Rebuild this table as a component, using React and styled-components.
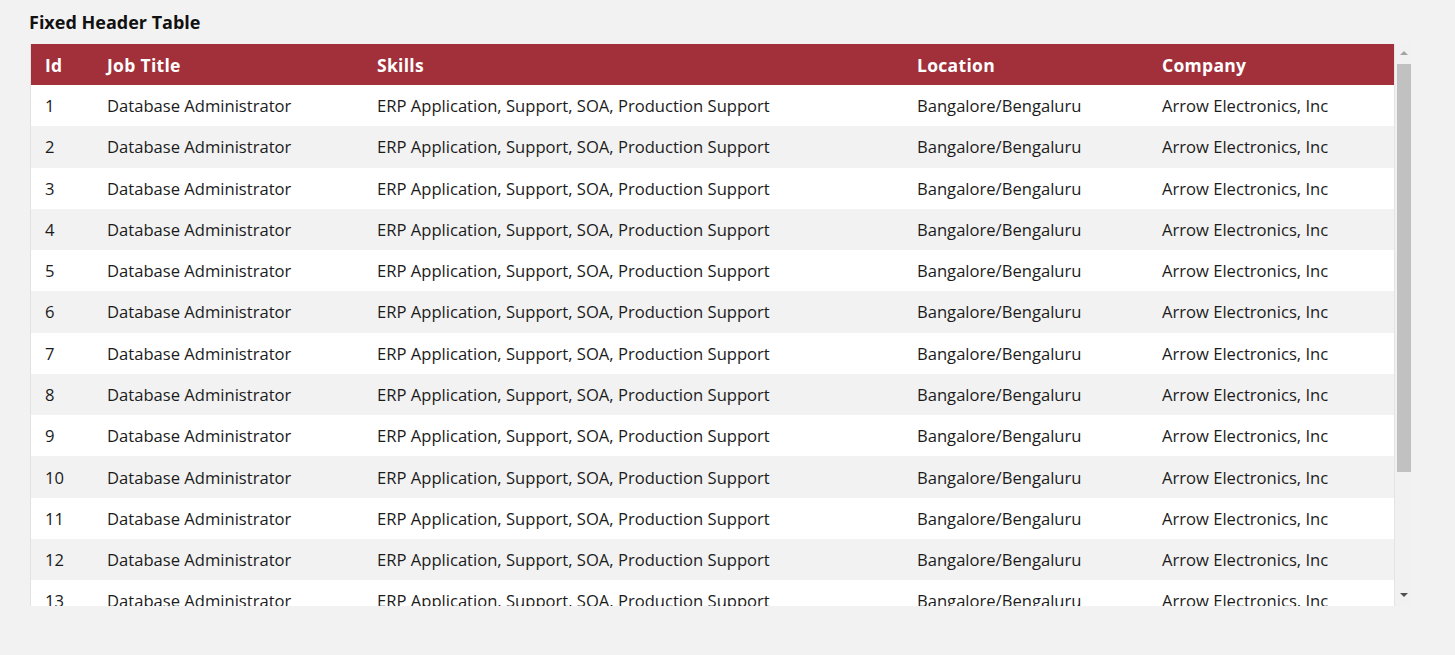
import styled, { createGlobalStyle } from "styled-components";

const GlobalStyle = createGlobalStyle`
  html, body {
    margin: 0;
    padding: 0;
    background: #f2f2f2;
    font-family: "Open Sans", "Noto Sans", "Liberation Sans", sans-serif;
    color: #1b1b1b;
  }
`;

const rows = Array.from({ length: 17 }, (_, i) => ({
  id: i + 1,
  title: "Database Administrator",
  skills: "ERP Application, Support, SOA, Production Support",
  location: "Bangalore/Bengaluru",
  company: "Arrow Electronics, Inc",
}));

const App = () => {
  return (
    <Page>
      <GlobalStyle />
      <Title>Fixed Header Table</Title>
      <Frame>
        <ScrollBox>
          <Table>
            <colgroup>
              <col style={{ width: 62 }} />
              <col style={{ width: 270 }} />
              <col style={{ width: 540 }} />
              <col style={{ width: 245 }} />
              <col />
            </colgroup>
            <thead>
              <tr>
                <Th>Id</Th>
                <Th>Job Title</Th>
                <Th>Skills</Th>
                <Th>Location</Th>
                <Th>Company</Th>
              </tr>
            </thead>
            <tbody>
              {rows.map((r) => (
                <Row key={r.id}>
                  <Td>{r.id}</Td>
                  <Td>{r.title}</Td>
                  <Td>{r.skills}</Td>
                  <Td>{r.location}</Td>
                  <Td>{r.company}</Td>
                </Row>
              ))}
            </tbody>
          </Table>
        </ScrollBox>
        <ScrollBar>
          <ArrowButton>
            <Arrow up />
          </ArrowButton>
          <Track>
            <Thumb />
          </Track>
          <ArrowButton down>
            <Arrow />
          </ArrowButton>
        </ScrollBar>
      </Frame>
    </Page>
  );
};

export default App;

const Page = styled.div`
  padding: 9px 0 0 30px;
`;

const Title = styled.h1`
  margin: 0 0 0 -1px;
  font-size: 18px;
  font-weight: 700;
  line-height: 26px;
  height: 35px;
  color: #111;
`;

const Frame = styled.div`
  display: flex;
  width: 1382px;
  height: 562px;
`;

const ScrollBox = styled.div`
  flex: 1;
  overflow: hidden;
  background: #fff;
  border-left: 1px solid #e2e2e2;
  border-right: 1px solid #e4e4e4;
`;

const ScrollBar = styled.div`
  width: 17px;
  display: flex;
  flex-direction: column;
  background: #f1f1f1;
`;

const ArrowButton = styled.div`
  height: 17px;
  display: flex;
  align-items: ${(p) => (p.down ? "flex-start" : "center")};
  justify-content: center;
  padding-top: ${(p) => (p.down ? "4px" : "0")};
  box-sizing: border-box;
`;

const Arrow = styled.div`
  width: 0;
  height: 0;
  border-left: 4px solid transparent;
  border-right: 4px solid transparent;
  ${(p) =>
    p.up
      ? `border-bottom: 4px solid #a3a3a3; margin-top: 1px;`
      : `border-top: 4px solid #505050;`}
`;

const Track = styled.div`
  flex: 1;
  padding: 3px 1px 0 2px;
`;

const Thumb = styled.div`
  height: 408px;
  background: #c1c1c1;
`;

const Table = styled.table`
  width: 100%;
  border-collapse: collapse;
  table-layout: fixed;
`;

const Th = styled.th`
  height: 41px;
  padding: 0 15px 0 14px;
  background: #a1303b;
  color: #fff;
  text-align: left;
  font-size: 17.5px;
  font-weight: 700;
  letter-spacing: 0.3px;
  white-space: nowrap;
`;

const Row = styled.tr`
  background: #fff;
  &:nth-child(even) {
    background: #f2f2f2;
  }
`;

const Td = styled.td`
  height: 41.27px;
  padding: 0 15px 0 14px;
  font-size: 16.6px;
  white-space: nowrap;
  color: #1b1b1b;
`;
